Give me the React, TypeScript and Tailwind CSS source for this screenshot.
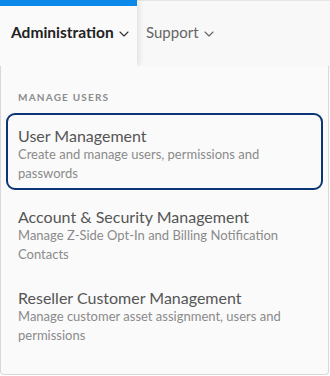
import React from "react";

function Chevron({ className }: { className?: string }) {
  return (
    <svg width="10" height="6" viewBox="0 0 10 6" fill="none" className={className}>
      <path d="M1 1l4 4 4-4" stroke="currentColor" strokeWidth="1.1" strokeLinecap="round" strokeLinejoin="round" />
    </svg>
  );
}

const items = [
  { title: "User Management", desc: "Create and manage users, permissions and passwords", active: true },
  { title: "Account & Security Management", desc: "Manage Z-Side Opt-In and Billing Notification Contacts", active: false },
  { title: "Reseller Customer Management", desc: "Manage customer asset assignment, users and permissions", active: false },
];

export default function App() {
  return (
    <div className="relative w-[330px] h-[376px] bg-white overflow-hidden" style={{ fontFamily: "Lato, 'Open Sans', sans-serif" }}>
      <div className="flex h-[66px] w-full bg-[#f8f8f8] border-t border-[#e6e6e6] shadow-[0_2px_8px_rgba(0,0,0,0.12)]">
        <div className="relative z-10 w-[137px] h-[66px] -mt-px bg-[#fafafa] border-t-[6px] border-t-[#0b87e8] shadow-[2px_0_6px_rgba(0,0,0,0.1)] flex items-center pl-[11px] pb-[6px]">
          <span className="text-[15.5px] font-bold text-[#222]">Administration</span>
          <Chevron className="ml-[5px] mt-[2px] text-[#333]" />
        </div>
        <div className="flex items-center pl-[9px] pb-[2px]">
          <span className="text-[15px] text-[#666]">Support</span>
          <Chevron className="ml-[5px] mt-[2px] text-[#666]" />
        </div>
      </div>
      <div className="absolute z-20 left-0 top-[66px] w-[329px] h-[309px] bg-[#fafafa] border border-t-0 border-[#d8d8d8] rounded-b-[4px] px-[5px]">
        <div className="pl-[12px] pt-[25px] text-[10px] font-bold tracking-[0.12em] text-[#8c8c8c] leading-[12px]">MANAGE USERS</div>
        <div className="mt-[10px] flex flex-col gap-[4px]">
          {items.map((it) => (
            <div
              key={it.title}
              className={
                it.active
                  ? "border-2 border-[#0b3574] rounded-[9px] pl-[10px] pr-2 pt-[12px] pb-[5px]"
                  : "border-2 border-transparent rounded-[9px] pl-[10px] pr-2 pt-[12px] pb-[5px]"
              }
            >
              <div className="text-[16px] leading-[18px] text-[#555]">{it.title}</div>
              <div className="text-[13px] leading-[19px] text-[#8a8a8a]">{it.desc}</div>
            </div>
          ))}
        </div>
      </div>
    </div>
  );
}
